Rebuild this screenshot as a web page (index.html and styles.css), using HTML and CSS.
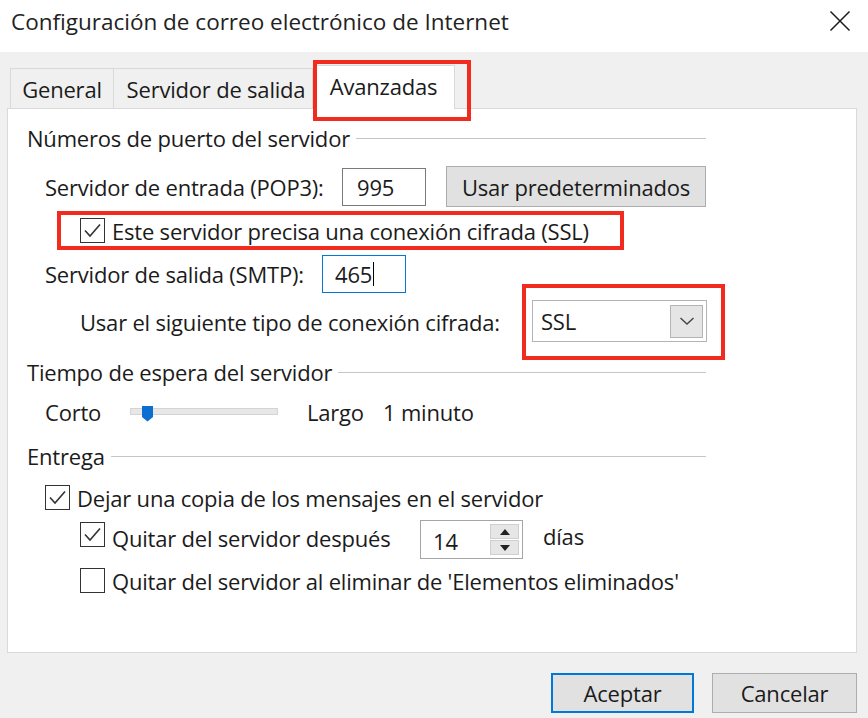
FILE: index.html
```html
<!DOCTYPE html>
<html lang="es">
<head>
<meta charset="utf-8">
<title>Configuración de correo electrónico de Internet</title>
<link rel="stylesheet" href="styles.css">
</head>
<body>
<div class="dialog">
  <header class="titlebar">
    <h1 class="title">Configuración de correo electrónico de Internet</h1>
    <span class="close" aria-label="Cerrar">
      <svg width="22" height="22" viewBox="0 0 22 22"><path d="M1.5 1.5L20.5 20.5M20.5 1.5L1.5 20.5" stroke="#1a1a1a" stroke-width="1.5" fill="none"/></svg>
    </span>
  </header>

  <nav class="tabs">
    <div class="tab tab-general">General</div>
    <div class="tab tab-salida">Servidor de salida</div>
    <div class="tab tab-active">Avanzadas</div>
  </nav>

  <section class="panel">
    <div class="group">
      <div class="heading heading-ports"><span>Números de puerto del servidor</span></div>

      <div class="row row-pop">
        <span class="lbl lbl-pop">Servidor de entrada (POP3):</span>
        <div class="field">995</div>
        <span class="btn btn-defaults">Usar predeterminados</span>
      </div>

      <div class="ssl-box">
        <span class="check">
          <svg width="25" height="25" viewBox="0 0 25 25"><rect x="0.5" y="0.5" width="24" height="24" fill="#fff" stroke="#333"/><path d="M5 12.5L10 18L20 6.5" stroke="#333" stroke-width="1.6" fill="none"/></svg>
        </span>
        <span class="lbl">Este servidor precisa una conexión cifrada (SSL)</span>
      </div>

      <div class="row row-smtp">
        <span class="lbl lbl-smtp">Servidor de salida (SMTP):</span>
        <div class="field field-focus">465<span class="caret"></span></div>
      </div>

      <div class="row row-enc">
        <span class="lbl lbl-enc">Usar el siguiente tipo de conexión cifrada:</span>
        <div class="enc-box">
          <div class="combo">
            <span class="combo-value">SSL</span>
            <span class="combo-btn">
              <svg width="16" height="10" viewBox="0 0 16 10"><path d="M1.5 2L8 8L14.5 2" stroke="#444" stroke-width="1.4" fill="none"/></svg>
            </span>
          </div>
        </div>
      </div>

      <div class="heading heading-timeout"><span>Tiempo de espera del servidor</span></div>

      <div class="row row-slider">
        <span class="lbl lbl-corto">Corto</span>
        <span class="slider">
          <svg width="148" height="17" viewBox="0 0 148 17"><rect x="0.5" y="3.5" width="147" height="6" fill="#e7e7e7" stroke="#d4d4d4"/><path d="M12 1H23V12L17.5 16.5L12 12Z" fill="#0a6fd0"/></svg>
        </span>
        <span class="lbl lbl-largo">Largo</span>
        <span class="lbl">1 minuto</span>
      </div>

      <div class="heading heading-delivery"><span>Entrega</span></div>

      <div class="row row-leave">
        <span class="check">
          <svg width="25" height="25" viewBox="0 0 25 25"><rect x="0.5" y="0.5" width="24" height="24" fill="#fff" stroke="#333"/><path d="M5 12.5L10 18L20 6.5" stroke="#333" stroke-width="1.6" fill="none"/></svg>
        </span>
        <span class="lbl">Dejar una copia de los mensajes en el servidor</span>
      </div>

      <div class="row row-after">
        <span class="check check-up">
          <svg width="25" height="25" viewBox="0 0 25 25"><rect x="0.5" y="0.5" width="24" height="24" fill="#fff" stroke="#333"/><path d="M5 12.5L10 18L20 6.5" stroke="#333" stroke-width="1.6" fill="none"/></svg>
        </span>
        <span class="lbl lbl-after">Quitar del servidor después</span>
        <div class="spin">
          <span class="spin-value">14</span>
          <span class="spin-btns">
            <span class="spin-btn"><svg width="10" height="6" viewBox="0 0 10 6"><path d="M5 0L10 6H0Z" fill="#222"/></svg></span>
            <span class="spin-btn"><svg width="10" height="6" viewBox="0 0 10 6"><path d="M0 0H10L5 6Z" fill="#222"/></svg></span>
          </span>
        </div>
        <span class="lbl lbl-days">días</span>
      </div>

      <div class="row row-deleted">
        <span class="check">
          <svg width="25" height="25" viewBox="0 0 25 25"><rect x="0.5" y="0.5" width="24" height="24" fill="#fff" stroke="#333"/></svg>
        </span>
        <span class="lbl">Quitar del servidor al eliminar de 'Elementos eliminados'</span>
      </div>
    </div>
  </section>

  <footer class="actions">
    <span class="btn btn-ok">Aceptar</span>
    <span class="btn btn-cancel">Cancelar</span>
  </footer>
</div>
</body>
</html>
```

FILE: styles.css
```css
* {
  box-sizing: border-box;
}

html, body {
  margin: 0;
  padding: 0;
}

body {
  width: 868px;
  height: 718px;
  overflow: hidden;
  background: #f0f0f0;
  font-family: "Open Sans", "Noto Sans", sans-serif;
  font-size: 22px;
  letter-spacing: -0.2px;
  color: #1b1b1b;
}

.dialog {
  display: flex;
  flex-direction: column;
  height: 718px;
}

/* Title bar */
.titlebar {
  height: 52px;
  background: #ffffff;
  display: flex;
  align-items: center;
  justify-content: space-between;
  padding: 0 17px 10px 11px;
}

.title {
  margin: 0;
  font-size: 22.5px;
  font-weight: normal;
  color: #222;
  letter-spacing: 0;
}

.close {
  display: flex;
  width: 22px;
  height: 22px;
  flex: none;
}

/* Tabs */
.tabs {
  display: flex;
  align-items: flex-end;
  height: 56px;
  padding-left: 10px;
}

.tab {
  height: 40px;
  display: flex;
  align-items: center;
  justify-content: center;
  border: 1px solid #d9d9d9;
  border-bottom: none;
  background: #f0f0f0;
  color: #1b1b1b;
  flex: none;
  white-space: nowrap;
}

.tab-general {
  width: 103px;
  border-right: none;
}

.tab-salida {
  width: 200px;
  padding-left: 6px;
}

.tab-active {
  position: relative;
  width: 142px;
  background: #ffffff;
  border-left: none;
  margin-bottom: -1px;
  height: 44px;
  z-index: 2;
  padding-bottom: 4px;
}

.tab-active::after {
  content: "";
  position: absolute;
  left: 0;
  top: -6px;
  width: 150px;
  height: 53px;
  border: 4px solid #f22b1f;
}

/* Panel */
.panel {
  margin: 0 11px 0 7px;
  height: 545px;
  background: #ffffff;
  border: 1px solid #d9d9d9;
  padding-top: 17px;
}

.group {
  margin-left: 19px;
  width: 679px;
  display: flex;
  flex-direction: column;
}

.heading {
  display: flex;
  align-items: center;
  height: 24px;
  white-space: nowrap;
}

.heading::after {
  content: "";
  flex: 1;
  height: 1px;
  background: #c6c6c6;
  margin-left: 6px;
}

.row {
  display: flex;
  align-items: center;
  white-space: nowrap;
}

.lbl {
  white-space: nowrap;
  flex: none;
}

/* Ports */
.row-pop {
  margin-top: 16px;
  height: 41px;
  padding-left: 18px;
}

.lbl-pop {
  width: 297px;
}

.field {
  width: 84px;
  height: 38px;
  border: 1px solid #7a7a7a;
  background: #fff;
  display: flex;
  align-items: center;
  padding-left: 14px;
  flex: none;
}

.field-focus {
  border-color: #0078d7;
  padding-left: 12px;
}

.caret {
  display: inline-block;
  width: 1px;
  height: 24px;
  background: #000;
  margin-left: 1px;
}

.btn {
  display: flex;
  align-items: center;
  justify-content: center;
  background: #e1e1e1;
  border: 1px solid #adadad;
  color: #1b1b1b;
  flex: none;
  white-space: nowrap;
}

.btn-defaults {
  margin-left: 20px;
  width: 260px;
  height: 41px;
}

.ssl-box {
  margin-top: 4px;
  margin-left: 30px;
  width: 567px;
  height: 39px;
  border: 4px solid #f22b1f;
  display: flex;
  align-items: center;
  padding-left: 19px;
  gap: 7px;
  white-space: nowrap;
}

.check {
  display: flex;
  width: 25px;
  height: 25px;
  flex: none;
}

.row-smtp {
  margin-top: 5px;
  height: 38px;
  padding-left: 18px;
}

.lbl-smtp {
  width: 277px;
}

.row-enc {
  margin-top: -9px;
  height: 76px;
  padding-left: 53px;
}

.lbl-enc {
  width: 442px;
}

.enc-box {
  width: 203px;
  height: 76px;
  border: 4px solid #f22b1f;
  padding: 12px 0 0 6px;
  flex: none;
}

.combo {
  width: 175px;
  height: 42px;
  border: 1px solid #b4b4b4;
  background: #fff;
  display: flex;
  align-items: center;
  justify-content: space-between;
  padding: 0 3px 0 8px;
}

.combo-btn {
  width: 33px;
  height: 33px;
  background: #e5e5e5;
  border: 1px solid #b4b4b4;
  display: flex;
  align-items: center;
  justify-content: center;
}

/* Timeout */
.row-slider {
  margin-top: 16px;
  height: 24px;
  padding-left: 18px;
}

.lbl-corto {
  width: 85px;
}

.slider {
  display: flex;
  width: 148px;
  height: 17px;
  margin-top: 2px;
  flex: none;
}

.lbl-largo {
  margin-left: 29px;
  width: 76px;
}

.heading-delivery {
  margin-top: 20px;
}

/* Delivery */
.row-leave {
  margin-top: 17px;
  height: 25px;
  padding-left: 18px;
  gap: 7px;
}

.row-after {
  margin-top: 10px;
  height: 39px;
  padding-left: 53px;
}

.check-up {
  margin-bottom: 10px;
  margin-right: 7px;
}

.lbl-after {
  width: 308px;
  margin-bottom: 4px;
}

.spin {
  width: 103px;
  height: 39px;
  border: 1px solid #a5a5a5;
  background: #fff;
  display: flex;
  align-items: center;
  justify-content: space-between;
  padding: 2px 3px 2px 12px;
  flex: none;
}

.spin-value {
  padding-top: 3px;
}

.spin-btns {
  display: flex;
  flex-direction: column;
  width: 29px;
  height: 31px;
  gap: 1px;
}

.spin-btn {
  flex: 1;
  background: #e6e6e6;
  border: 1px solid #cfcfcf;
  display: flex;
  align-items: center;
  justify-content: center;
}

.lbl-days {
  margin-left: 20px;
  margin-bottom: 8px;
}

.row-deleted {
  margin-top: 9px;
  height: 25px;
  padding-left: 53px;
  gap: 7px;
}

/* Footer */
.actions {
  display: flex;
  justify-content: flex-end;
  gap: 18px;
  margin-top: 20px;
  padding-right: 11px;
}

.btn-ok {
  width: 143px;
  height: 40px;
  border: 2px solid #0078d7;
}

.btn-cancel {
  width: 145px;
  height: 40px;
}
```
